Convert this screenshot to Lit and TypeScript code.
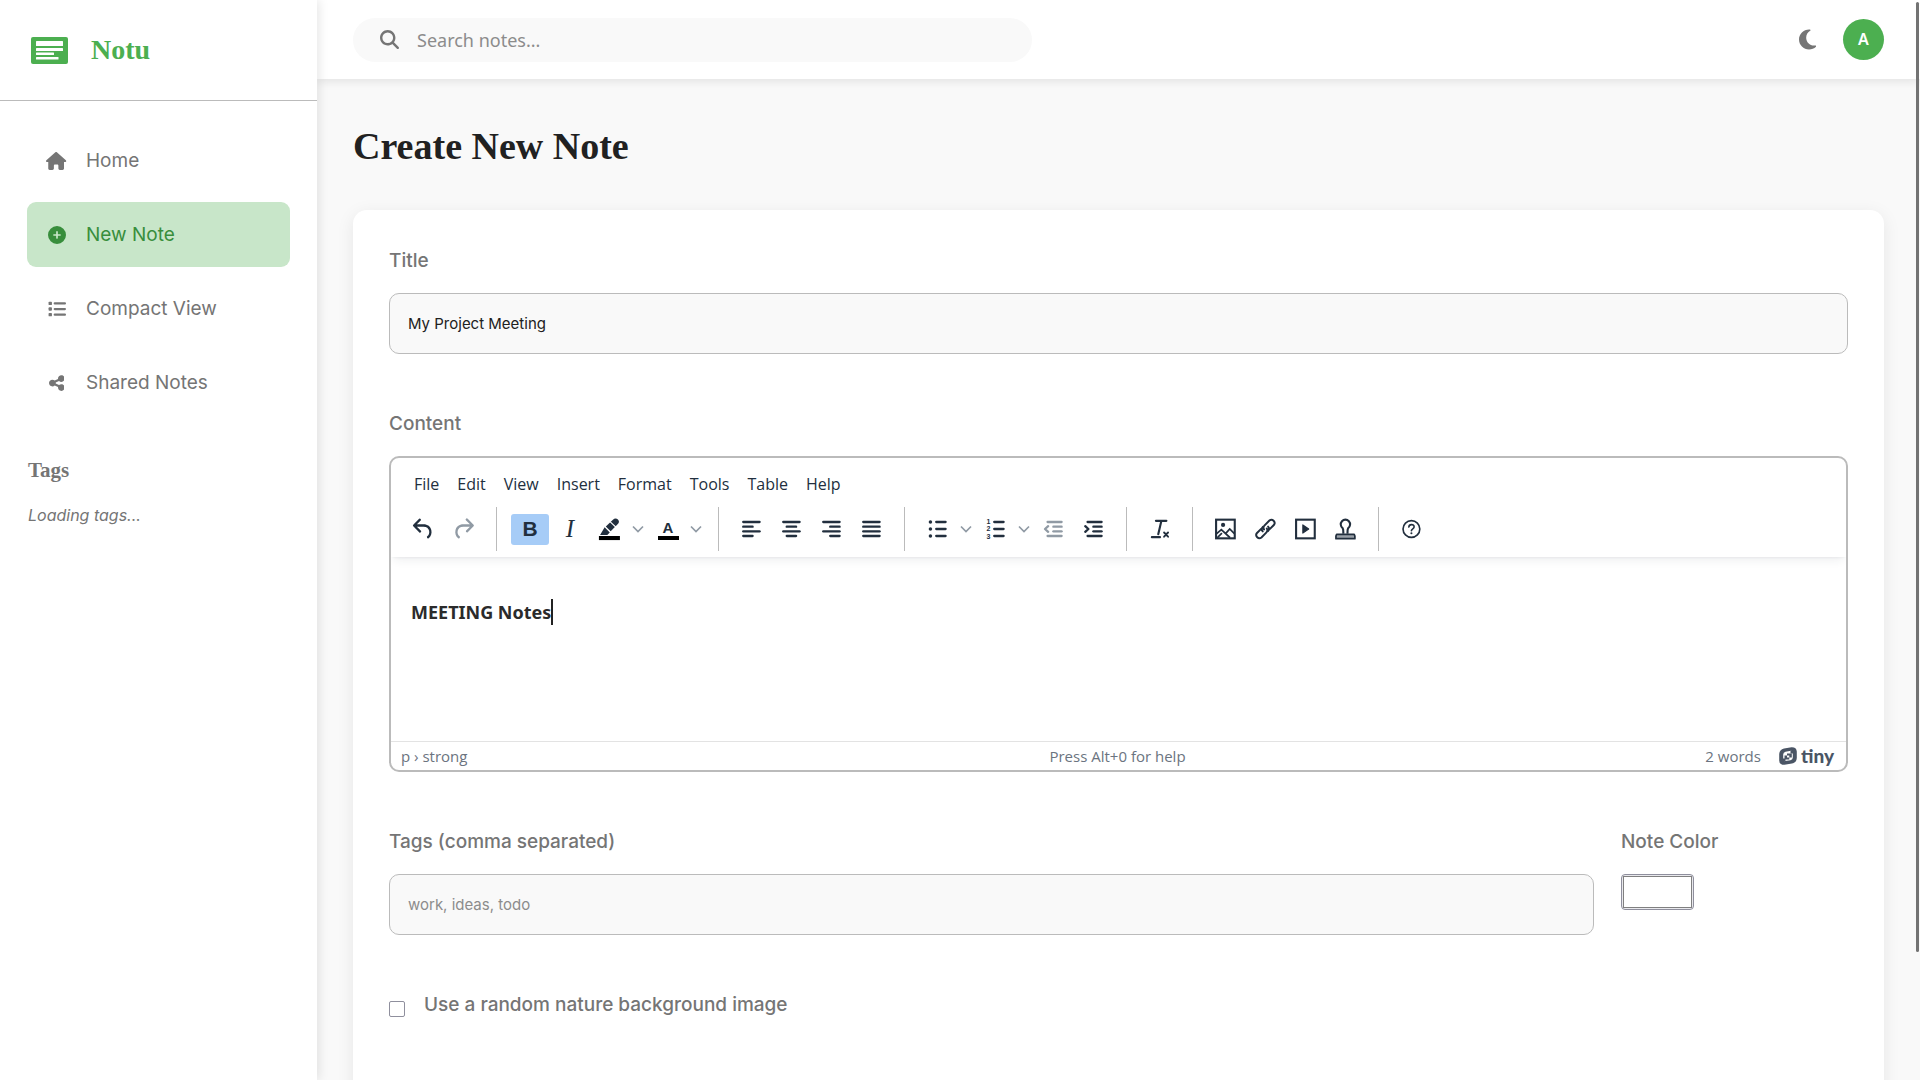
import { LitElement, html, css, svg, nothing } from "lit";
import type { TemplateResult, SVGTemplateResult } from "lit";
import { customElement, property, state } from "lit/decorators.js";
import { classMap } from "lit/directives/class-map.js";
import { styleMap } from "lit/directives/style-map.js";

const solid = (box: string, d: string) =>
  html`<svg class="icon" viewBox=${box} fill="currentColor" aria-hidden="true"><path d=${d}></path></svg>`;

const icons = {
  home: solid("0 0 576 512", "M575.8 255.5c0 18-15 32.1-32 32.1h-32l.7 160.2c0 2.7-.2 5.4-.5 8.1V472c0 22.1-17.9 40-40 40H456c-1.1 0-2.2 0-3.3-.1c-1.4 .1-2.8 .1-4.2 .1H416 392c-22.1 0-40-17.9-40-40V448 384c0-17.7-14.3-32-32-32H256c-17.7 0-32 14.3-32 32v64 24c0 22.1-17.9 40-40 40H160 128.1c-1.5 0-3-.1-4.5-.2c-1.2 .1-2.4 .2-3.6 .2H104c-22.1 0-40-17.9-40-40V360c0-.9 0-1.9 .1-2.8V287.6H32c-18 0-32-14-32-32.1c0-9 3-17 10-24L266.4 8c7-7 15-8 22-8s15 2 21 7L564.8 231.5c8 7 12 15 11 24z"),
  plus: solid("0 0 512 512", "M256 512A256 256 0 1 0 256 0a256 256 0 1 0 0 512zM232 344V280H168c-13.3 0-24-10.7-24-24s10.7-24 24-24h64V168c0-13.3 10.7-24 24-24s24 10.7 24 24v64h64c13.3 0 24 10.7 24 24s-10.7 24-24 24H280v64c0 13.3-10.7 24-24 24s-24-10.7-24-24z"),
  list: html`<svg class="icon" viewBox="0 0 512 512" fill="currentColor" aria-hidden="true">
    <rect x="16" y="48" width="96" height="96" rx="24"></rect>
    <rect x="16" y="208" width="96" height="96" rx="24"></rect>
    <rect x="16" y="368" width="96" height="96" rx="24"></rect>
    <rect x="160" y="64" width="352" height="64" rx="32"></rect>
    <rect x="160" y="224" width="352" height="64" rx="32"></rect>
    <rect x="160" y="384" width="352" height="64" rx="32"></rect>
  </svg>`,
  share: solid("0 0 448 512", "M352 224c53 0 96-43 96-96s-43-96-96-96s-96 43-96 96c0 4 .2 8 .7 11.9l-94.1 47C145.4 170.2 121.9 160 96 160c-53 0-96 43-96 96s43 96 96 96c25.9 0 49.4-10.2 66.6-26.9l94.1 47c-.5 3.9-.7 7.8-.7 11.9c0 53 43 96 96 96s96-43 96-96s-43-96-96-96c-25.9 0-49.4 10.2-66.6 26.9l-94.1-47c.5-3.9 .7-7.8 .7-11.9s-.2-8-.7-11.9l94.1-47C302.6 213.8 326.1 224 352 224z"),
  moon: solid("0 0 384 512", "M223.5 32C100 32 0 132.3 0 256S100 480 223.5 480c60.6 0 115.5-24.2 155.8-63.4c5-4.9 6.3-12.5 3.1-18.7s-10.1-9.7-17-8.5c-9.8 1.7-19.8 2.6-30.1 2.6c-96.9 0-175.5-78.8-175.5-176c0-65.8 36-123.1 89.3-153.3c6.1-3.5 9.2-10.5 7.7-17.3s-7.3-11.9-14.3-12.5c-6.3-.5-12.6-.8-19-.8z"),
  search: solid("0 0 512 512", "M416 208c0 45.9-14.9 88.3-40 122.7L502.6 457.4c12.5 12.5 12.5 32.8 0 45.3s-32.8 12.5-45.3 0L330.7 376c-34.4 25.2-76.8 40-122.7 40C93.1 416 0 322.9 0 208S93.1 0 208 0S416 93.1 416 208zM208 352a144 144 0 1 0 0-288 144 144 0 1 0 0 288z"),
};

const lines = (...rows: [number, number, number][]) =>
  rows.map(([y, from, to]) => svg`<path d="M${from} ${y}H${to}" fill="none" stroke="currentColor" stroke-width="2" stroke-linecap="round"></path>`);

const glyphs: Record<string, SVGTemplateResult | SVGTemplateResult[]> = {
  undo: svg`<path fill="currentColor" d="M6.4 8H12c3.7 0 6.2 2 6.8 5.1.6 2.7-.4 5.6-2.3 6.8a1 1 0 0 1-1-1.8c1.1-.6 1.8-2.7 1.4-4.6-.5-2.1-2.1-3.5-4.9-3.5H6.4l3.3 3.3a1 1 0 1 1-1.4 1.4l-5-5a1 1 0 0 1 0-1.4l5-5a1 1 0 0 1 1.4 1.4L6.4 8Z"></path>`,
  redo: svg`<path fill="currentColor" d="M17.6 10H12c-2.8 0-4.4 1.4-4.9 3.5-.4 2 .3 4 1.4 4.6a1 1 0 1 1-1 1.8c-2-1.2-2.9-4.1-2.3-6.8.6-3 3-5.1 6.8-5.1h5.6l-3.3-3.3a1 1 0 1 1 1.4-1.4l5 5a1 1 0 0 1 0 1.4l-5 5a1 1 0 0 1-1.4-1.4l3.3-3.3Z"></path>`,
  highlight: svg`<path fill="currentColor" d="M4 17.200 7.900 10.600 12.300 14.900 10.200 17.200ZM8.900 9.800 14.800 4.200Q17.300 1.900 19.300 3.900T18.800 8.200L13.100 13.900Z"></path><path stroke="#fff" stroke-width=".9" d="M12.500 5.600 17.600 10.500"></path><rect x="3" y="18" width="18" height="3.500" fill="#000"></rect>`,
  alignLeft: lines([5, 5, 19], [9, 5, 13], [13, 5, 19], [17, 5, 13]),
  alignCenter: lines([5, 5, 19], [9, 8, 16], [13, 5, 19], [17, 8, 16]),
  alignRight: lines([5, 5, 19], [9, 11, 19], [13, 5, 19], [17, 11, 19]),
  justify: lines([5, 5, 19], [9, 5, 19], [13, 5, 19], [17, 5, 19]),
  bullets: [...lines([5, 11, 19], [11, 11, 19], [17, 11, 19]), svg`<g fill="currentColor"><circle cx="6" cy="5" r="1.5"></circle><circle cx="6" cy="11" r="1.5"></circle><circle cx="6" cy="17" r="1.5"></circle></g>`],
  numbers: [...lines([5, 11, 19], [11, 11, 19], [17, 11, 19]), svg`<g class="digits" fill="currentColor" text-anchor="middle"><text x="6" y="7">1</text><text x="6" y="13">2</text><text x="6" y="19.200">3</text></g>`],
  outdent: [...lines([5, 7, 19], [9, 12, 19], [13, 12, 19], [17, 7, 19]), svg`<path d="m7.500 8.600-2.700 2.400 2.700 2.400" fill="none" stroke="currentColor" stroke-width="2" stroke-linecap="round" stroke-linejoin="round"></path>`],
  indent: [...lines([5, 7, 19], [9, 12, 19], [13, 12, 19], [17, 7, 19]), svg`<path d="m5 8.600 2.700 2.400L5 13.400" fill="none" stroke="currentColor" stroke-width="2" stroke-linecap="round" stroke-linejoin="round"></path>`],
  clear: svg`<g fill="none" stroke="currentColor" stroke-width="1.800" stroke-linecap="round"><path d="M9 5h9M13.700 5 11 16.500"></path><path d="M5.500 19h7"></path><path stroke-width="1.600" d="m16 15 3.400 3.600M19.400 15l-3.400 3.600"></path></g>`,
  image: svg`<g fill="none" stroke="currentColor" stroke-width="1.800"><rect x="4" y="4" width="16" height="16"></rect><path stroke-width="1.500" d="m4.500 16 4-3.500 7.500 7M12.500 15.500l3.200-3.500 4 4M5 19.500l4-4"></path></g><circle cx="10" cy="8.500" r="1.800" fill="currentColor"></circle>`,
  link: svg`<g fill="none" stroke="currentColor" stroke-width="1.700" stroke-linecap="round"><path d="M9.700 14C8.500 12.800 8.700 11.300 9.800 10.200M14.300 10c1.200 1.200 1 2.700-.1 3.800"></path><path d="m8.100 12.100-3.300 3.300a2.700 2.700 0 0 0 3.800 3.800l4.100-4.100c1.200-1.200 1.200-2.500.5-3.500M15.900 11.900l3.300-3.300a2.700 2.700 0 0 0-3.800-3.800l-4.100 4.100c-1.200 1.200-1.200 2.500-.5 3.500"></path></g>`,
  media: svg`<rect x="4" y="4" width="16" height="16" fill="none" stroke="currentColor" stroke-width="1.800"></rect><path fill="currentColor" stroke="currentColor" stroke-linejoin="round" d="M9.800 8.500v7l5-3.500Z"></path>`,
  stamp: svg`<g fill="none" stroke="currentColor" stroke-width="1.800" stroke-linejoin="round"><path d="M10.200 16c0-2.500.2-3.500-.6-4.800a4 4 0 1 1 4.800 0c-.8 1.300-.6 2.300-.6 4.800"></path><path fill="#9aa1a9" stroke-width="1.500" d="M4.500 16.500h15l.6 1.500v2.300H3.900V18Z"></path></g>`,
  help: svg`<circle cx="12" cy="12" r="7.200" fill="none" stroke="currentColor" stroke-width="1.400"></circle><path d="M9.800 10.300c.2-2.900 4.700-2.700 4.500 0-.1 1.600-2.300 1.500-2.300 3.200" fill="none" stroke="currentColor" stroke-width="1.400" stroke-linecap="round"></path><circle cx="12" cy="15.700" r=".9" fill="currentColor"></circle>`,
};

const raised = new Set(["alignLeft", "alignCenter", "alignRight", "justify", "bullets", "numbers", "outdent", "indent"]);

interface Tool {
  id: string;
  label: string;
  letter?: string;
  menu?: boolean;
  disabled?: boolean;
}

const toolGroups: Tool[][] = [
  [{ id: "undo", label: "Undo" }, { id: "redo", label: "Redo", disabled: true }],
  [
    { id: "bold", label: "Bold", letter: "B" },
    { id: "italic", label: "Italic", letter: "I" },
    { id: "highlight", label: "Background color", menu: true },
    { id: "color", label: "Text color", letter: "A", menu: true },
  ],
  [
    { id: "alignLeft", label: "Align left" },
    { id: "alignCenter", label: "Align center" },
    { id: "alignRight", label: "Align right" },
    { id: "justify", label: "Justify" },
  ],
  [
    { id: "bullets", label: "Bullet list", menu: true },
    { id: "numbers", label: "Numbered list", menu: true },
    { id: "outdent", label: "Decrease indent", disabled: true },
    { id: "indent", label: "Increase indent" },
  ],
  [{ id: "clear", label: "Clear formatting" }],
  [
    { id: "image", label: "Insert image" },
    { id: "link", label: "Insert link" },
    { id: "media", label: "Insert media" },
    { id: "stamp", label: "Insert stamp" },
  ],
  [{ id: "help", label: "Help" }],
];

const menus = ["File", "Edit", "View", "Insert", "Format", "Tools", "Table", "Help"];

const base = css`
  *, *::before, *::after { box-sizing: border-box; }
  button { font: inherit; color: inherit; background: none; border: 0; padding: 0; cursor: pointer; }
  svg { display: block; flex: none; }
`;

@customElement("note-editor")
export class NoteEditor extends LitElement {
  static styles = [base, css`
    :host {
      display: flex; flex-direction: column; overflow: hidden; background: #fff;
      border: 2px solid #bbb; border-radius: 10px; color: #222f3e;
      font: 16px/24px "Noto Sans", sans-serif;
    }
    .head { position: relative; box-shadow: 0 2px 3px -2px rgba(34, 47, 62, .1), 0 6px 9px -3px rgba(34, 47, 62, .08); }
    .menubar { display: flex; gap: 2px; padding: 11px 15px 0; font: 16px/30px "Open Sans", sans-serif; }
    .menu { padding: 0 8px; }
    .toolbar { display: flex; flex-wrap: wrap; padding: 8px 0 6px; }
    .group { display: flex; align-items: center; gap: 2px; height: 44px; padding: 0 13px 0 14px; border-right: 1px solid #bbb; }
    .group:last-child { border-right: 0; }
    .split { display: flex; }
    .tool { display: grid; place-items: center; width: 38px; height: 31px; border-radius: 3px; }
    .tool:disabled, .arrow { color: #909aa4; }
    .arrow { display: grid; place-items: center; width: 18px; height: 31px; }
    .on { background: #a6ccf7; }
    .glyph { width: 28px; height: 28px; }
    .digits { font: bold 6px "Liberation Sans", sans-serif; }
    .bold { font: bold 21px/28px "Liberation Sans", sans-serif; }
    .italic { font: italic 25px/28px "Liberation Serif", serif; }
    .color { width: 21px; border-bottom: 4px solid #000; font: bold 15px/17px "Liberation Sans", sans-serif; }
    .body { flex: 1; min-height: 184px; padding: 42px 20px; outline: none; }
    .para { margin: 0; display: flex; align-items: center; color: #2b2b2b; font-size: 18px; line-height: 26px; }
    .caret { width: 2px; height: 26px; background: #222; }
    .status {
      display: grid; grid-template-columns: 1fr auto 1fr; align-items: center; height: 29px; padding: 0 12px 0 10px;
      border-top: 1px solid #e3e3e3; color: #6b7480; font: 15px/26px "Open Sans", sans-serif;
    }
    .right { display: flex; justify-content: flex-end; align-items: center; gap: 18px; }
    .brand { display: flex; align-items: center; gap: 4px; color: #4a5565; text-decoration: none; font: 900 19px/24px Lato, sans-serif; }
    .mark { width: 18px; height: 18px; }
  `];

  @state() private active = "bold";
  @property({ type: String }) text = "";

  private tool(t: Tool): TemplateResult {
    const on = t.id === this.active;
    const main = html`<button type="button" class=${classMap({ tool: true, on })} aria-label=${t.label} aria-pressed=${on} ?disabled=${!!t.disabled}>
      ${t.letter
        ? html`<span class=${t.id}>${t.letter}</span>`
        : html`<svg class="glyph" viewBox=${raised.has(t.id) ? "0.5 -1 24 24" : "0.5 0 24 24"} aria-hidden="true">${glyphs[t.id]}</svg>`}
    </button>`;
    if (!t.menu) return main;
    return html`<div class="split">${main}<button type="button" class="arrow" aria-label="${t.label} menu">
      <svg width="12" height="8" viewBox="0 0 12 8" aria-hidden="true"><path d="m1 1.500 5 5 5-5" fill="none" stroke="currentColor" stroke-width="1.700"></path></svg>
    </button></div>`;
  }

  render() {
    return html`
      <div class="head">
        <div class="menubar" role="menubar">
          ${menus.map((m) => html`<button type="button" class="menu" role="menuitem">${m}</button>`)}
        </div>
        <div class="toolbar" role="toolbar" aria-label="Formatting">
          ${toolGroups.map((g) => html`<div class="group">${g.map((t) => this.tool(t))}</div>`)}
        </div>
      </div>
      <div class="body" role="textbox" aria-multiline="true" aria-label="Content" tabindex="0">
        <p class="para"><strong>${this.text}</strong><span class="caret"></span></p>
      </div>
      <div class="status">
        <span>p › strong</span>
        <span>Press Alt+0 for help</span>
        <div class="right">
          <span>${this.text.split(" ").length} words</span>
          <a class="brand" href="#tiny">
            <svg class="mark" viewBox="0 0 18 18" aria-hidden="true">
              <path fill="currentColor" fill-rule="evenodd" d="M5 1.500 12.500.2Q17.500 0 17.800 4.500V11q-.2 4.500-4.800 5.500L5.500 17.800Q.3 18 .2 13.500V7Q.5 2.500 5 1.500ZM6.500 4.700Q4.300 5.200 4.200 7.500v5q.2 2 2 1.600L11.500 13.200Q13.800 12.700 13.800 10.500V5.300q-.2-1.800-2-1.500Z"></path>
              <path fill="currentColor" fill-rule="evenodd" d="M8 6.500h4.800v4H10.300v2H5.500v-4H8ZM8 8.500v2h2.300v-2Z"></path>
              <path fill="currentColor" d="M11.500 3.500h2.500v3h-2.500ZM4 11.500h2.500v3H4Z"></path>
            </svg>tiny</a>
        </div>
      </div>`;
  }
}

@customElement("app-root")
export class AppRoot extends LitElement {
  static styles = [base, css`
    :host {
      display: grid; grid-template-columns: 317px minmax(0, 1fr); height: 100vh; overflow: hidden;
      position: relative; background: #f9f9f9; color: #757575; font: 19px/26px Inter, sans-serif;
    }
    a { color: inherit; text-decoration: none; }
    .sidebar { position: relative; z-index: 2; background: #fff; box-shadow: 2px 0 10px rgba(0, 0, 0, .1); }
    .logo {
      display: flex; align-items: center; gap: 23px; height: 101px; padding: 0 31px; border-bottom: 1px solid #bbb;
      color: #4caf50; font: bold 28px/40px "Liberation Serif", serif;
    }
    .logo-mark { width: 37px; height: 27px; }
    .nav { display: flex; flex-direction: column; gap: 9px; padding: 27px 27px 0; }
    .item { display: flex; align-items: center; gap: 19px; height: 65px; padding: 0 19px; border-radius: 9px; }
    .current { background: #c8e6c9; color: #388e3c; }
    .slot { display: grid; place-items: center; width: 21px; }
    .icon { height: 18px; }
    .tags { padding: 41px 28px 0; }
    .tags-title { margin: 0; font: bold 21px/28px "Liberation Serif", serif; }
    .loading { margin: 18px 0 0; font-size: 16px; line-height: 26px; font-style: italic; }
    .page { display: flex; flex-direction: column; min-width: 0; min-height: 0; }
    .topbar {
      position: relative; z-index: 1; flex: none; display: flex; align-items: center; justify-content: space-between;
      height: 79px; padding: 0 36px; background: #fff; box-shadow: 0 2px 10px rgba(0, 0, 0, .1);
    }
    .search { display: flex; align-items: center; gap: 18px; flex: 0 1 679px; height: 44px; padding: 0 27px; border-radius: 22px; background: #f9f9f9; }
    .search .icon { height: 19px; }
    .search-input { flex: 1; min-width: 0; border: 0; outline: 0; padding: 0; background: none; color: #212121; font: 18px/26px "Noto Sans", sans-serif; }
    ::placeholder { color: #8c8c8c; opacity: 1; }
    .actions { display: flex; align-items: center; gap: 27px; }
    .theme .icon { height: 23px; }
    .avatar { width: 41px; height: 41px; border-radius: 50%; background: #4caf50; color: #fff; font: 600 16px/41px "Noto Sans", sans-serif; }
    .content { flex: 1; min-height: 0; padding: 42px 36px 0; overflow: hidden; }
    .heading { margin: 0 0 39px; color: #212121; font: bold 38px/50px "Liberation Serif", serif; }
    .card {
      display: flex; flex-direction: column; gap: 55px; min-height: 100%; padding: 36px;
      background: #fff; border-radius: 14px; box-shadow: 0 4px 18px rgba(0, 0, 0, .08);
    }
    .field { display: flex; flex-direction: column; align-items: stretch; gap: 18px; min-width: 0; }
    .label { line-height: 29px; font-weight: 500; }
    .text { width: 100%; height: 61px; padding: 0 18px; border: 1px solid #bbb; border-radius: 10px; outline: 0; background: #f9f9f9; color: #212121; font: 15px/24px Inter, sans-serif; }
    .editor { min-height: 316px; }
    .row { display: grid; grid-template-columns: minmax(0, 1fr) 227px; gap: 27px; }
    .swatch {
      appearance: none; width: 73px; height: 36px; padding: 1px; border: 1px solid #8f8f9d; border-radius: 4px; background: #e9e9ed;
    }
    .swatch::-webkit-color-swatch-wrapper { padding: 0; }
    .swatch::-webkit-color-swatch { border: 1px solid #808080; border-radius: 0; }
    .check { display: flex; align-items: center; gap: 19px; }
    .box { appearance: none; width: 16px; height: 16px; margin: 8px 0 0; border: 1px solid #8f8f9d; border-radius: 2px; background: #fff; }
    .thumb { position: absolute; z-index: 3; top: 2px; right: 1px; width: 3px; border-radius: 2px; background: #737373; }
  `];

  @state() private current = "New Note";
  private scrolled = 88;

  private nav = [
    { name: "Home", icon: icons.home },
    { name: "New Note", icon: icons.plus },
    { name: "Compact View", icon: icons.list },
    { name: "Shared Notes", icon: icons.share },
  ];

  render() {
    return html`
      <aside class="sidebar">
        <a class="logo" href="#home">
          <svg class="logo-mark" viewBox="0 0 37 27" aria-hidden="true">
            <rect width="37" height="27" rx="2" fill="#4caf50"></rect>
            <g fill="#fff">
              <rect x="5" y="4" width="27" height="5" rx=".5"></rect>
              <rect x="5" y="11" width="27" height="3" rx=".5"></rect>
              <rect x="5" y="15.500" width="18" height="2.500" rx=".5"></rect>
              <rect x="5" y="20" width="22.500" height="2.500" rx=".5"></rect>
            </g>
          </svg>
          <span>Notu</span>
        </a>
        <nav class="nav">
          ${this.nav.map((n) => html`<a
            class=${classMap({ item: true, current: n.name === this.current })}
            href="#${n.name.toLowerCase().replace(" ", "-")}"
            aria-current=${n.name === this.current ? "page" : nothing}
          ><span class="slot">${n.icon}</span><span>${n.name}</span></a>`)}
        </nav>
        <section class="tags">
          <h2 class="tags-title">Tags</h2>
          <p class="loading">Loading tags...</p>
        </section>
      </aside>
      <div class="page">
        <header class="topbar">
          <div class="search">
            ${icons.search}
            <input class="search-input" type="search" placeholder="Search notes..." aria-label="Search notes" />
          </div>
          <div class="actions">
            <button type="button" class="theme" aria-label="Dark mode">${icons.moon}</button>
            <button type="button" class="avatar" aria-label="Account">A</button>
          </div>
        </header>
        <main class="content">
          <h1 class="heading">Create New Note</h1>
          <form class="card">
            <div class="field">
              <label class="label" for="title">Title</label>
              <input class="text" id="title" type="text" value="My Project Meeting" />
            </div>
            <div class="field">
              <span class="label">Content</span>
              <note-editor class="editor" text="MEETING Notes"></note-editor>
            </div>
            <div class="row">
              <div class="field">
                <label class="label" for="tags">Tags (comma separated)</label>
                <input class="text" id="tags" type="text" placeholder="work, ideas, todo" />
              </div>
              <div class="field">
                <label class="label" for="color">Note Color</label>
                <input class="swatch" id="color" type="color" value="#ffffff" />
              </div>
            </div>
            <div class="check">
              <input class="box" id="nature" type="checkbox" />
              <label class="label" for="nature">Use a random nature background image</label>
            </div>
          </form>
        </main>
      </div>
      <div class="thumb" style=${styleMap({ height: `${this.scrolled}%` })}></div>`;
  }
}
